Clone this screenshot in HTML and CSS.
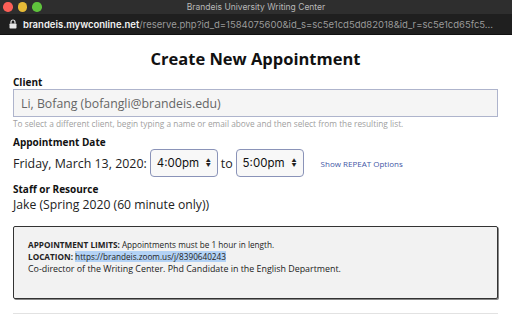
FILE: index.html
```html
<!DOCTYPE html>
<html lang="en">
<head>
    <meta charset="UTF-8">
    <meta name="viewport" content="width=device-width, initial-scale=1.0">
    <title>Brandeis University Writing Center</title>
    <link rel="stylesheet" href="styles.css">
</head>
<body>
    <div class="titlebar">
        <div class="lights">
            <span class="light red"></span>
            <span class="light yellow"></span>
            <span class="light green"></span>
        </div>
        <div class="window-title">Brandeis University Writing Center</div>
    </div>
    <div class="urlbar">
        <svg class="lock" width="8" height="10" viewBox="0 0 8 10">
            <path d="M2 4.5V3a2 2 0 0 1 4 0v1.5" fill="none" stroke="#e8e8e8" stroke-width="1.2"/>
            <rect x="0.5" y="4.5" width="7" height="5" rx="0.8" fill="#e8e8e8"/>
        </svg>
        <span class="host">brandeis.mywconline.net</span><span class="path">/reserve.php?id_d=1584075600&amp;id_s=sc5e1cd5dd82018&amp;id_r=sc5e1cd65fc5...</span>
    </div>

    <div class="page">
        <h1>Create New Appointment</h1>

        <div class="field">
            <label class="field-label">Client</label>
            <div class="client-input">Li, Bofang (bofangli@brandeis.edu)</div>
            <div class="hint">To select a different client, begin typing a name or email above and then select from the resulting list.</div>
        </div>

        <div class="field">
            <label class="field-label">Appointment Date</label>
            <div class="date-row">
                <span class="date-text">Friday, March 13, 2020:</span>
                <div class="select">4:00pm <span class="arrows">&#9650;<br>&#9660;</span></div>
                <span class="date-text">to</span>
                <div class="select">5:00pm <span class="arrows">&#9650;<br>&#9660;</span></div>
                <a class="repeat" href="#">Show REPEAT Options</a>
            </div>
        </div>

        <div class="field">
            <label class="field-label">Staff or Resource</label>
            <div class="staff">Jake (Spring 2020 (60 minute only))</div>
        </div>

        <div class="limits">
            <div class="small"><b>APPOINTMENT LIMITS:</b> Appointments must be 1 hour in length.</div>
            <div class="small"><b>LOCATION:</b> <span class="selected">https://brandeis.zoom.us/j/8390640243</span></div>
            <div class="bio">Co-director of the Writing Center. Phd Candidate in the English Department.</div>
        </div>

        <hr class="divider">
    </div>
</body>
</html>
```

FILE: styles.css
```css
body {
    margin: 0;
    font-family: "Open Sans", sans-serif;
    background-color: #fff;
    color: #222;
    overflow: hidden;
}

.titlebar {
    height: 14px;
    background-color: #2e2e2e;
    position: relative;
    display: flex;
    align-items: center;
    justify-content: center;
}

.lights {
    position: absolute;
    left: 3px;
    top: 2px;
    display: flex;
    gap: 5px;
}

.light {
    width: 9.5px;
    height: 9.5px;
    border-radius: 50%;
}

.red { background-color: #fc5f57; }
.yellow { background-color: #e6bb37; }
.green { background-color: #5fc33c; }

.window-title {
    font-family: Inter, "Liberation Sans", sans-serif;
    font-size: 8.5px;
    color: #b8b8b8;
}

.urlbar {
    height: 20px;
    background-color: #1f1f1f;
    display: flex;
    align-items: center;
    padding-left: 9px;
    font-family: Inter, "Liberation Sans", sans-serif;
    font-size: 9.5px;
    white-space: nowrap;
    overflow: hidden;
    border-bottom: 1px solid #111;
}

.lock {
    margin-right: 6px;
}

.host {
    color: #f2f2f2;
    font-weight: 600;
}

.path {
    color: #9a9a9a;
}

.page {
    padding: 0 14px 0 13px;
}

h1 {
    margin: 12px 0 5px;
    text-align: center;
    font-size: 16.5px;
    line-height: 24px;
    font-weight: 700;
    color: #111;
}

.field {
    margin-bottom: 6px;
}

.field-label {
    display: block;
    font-size: 10px;
    line-height: 13px;
    font-weight: 700;
    color: #111;
}

.client-input {
    height: 28px;
    box-sizing: border-box;
    border: 1px solid #aeb4cc;
    background-color: #f5f5f5;
    padding: 0 7px;
    display: flex;
    align-items: center;
    font-size: 12.3px;
    color: #666;
}

.hint {
    font-size: 8.3px;
    line-height: 12px;
    color: #a0a0a0;
    margin-top: 1px;
}

.date-row {
    display: flex;
    align-items: center;
    gap: 3px;
}

.date-text {
    font-size: 12.4px;
    color: #222;
}

.select {
    width: 68px;
    height: 28px;
    box-sizing: border-box;
    border: 1px solid #8a93b8;
    border-radius: 4px;
    background-color: #f8f8f8;
    display: flex;
    align-items: center;
    justify-content: space-between;
    padding: 0 6px 0 6px;
    font-family: Inter, "Liberation Sans", sans-serif;
    font-size: 11.5px;
    color: #111;
}

.arrows {
    font-size: 5px;
    line-height: 5px;
    color: #222;
}

.repeat {
    margin-left: 14px;
    font-size: 8px;
    color: #3f57a6;
    text-decoration: none;
}

.staff {
    font-size: 12.2px;
    line-height: 17px;
    color: #222;
}

.limits {
    margin-top: 13px;
    height: 73px;
    box-sizing: border-box;
    border: 1px solid #333;
    border-radius: 2px;
    box-shadow: 1px 1px 0 #888;
    background-color: #f2f2f2;
    padding: 12px 14px;
}

.small {
    font-size: 8.2px;
    color: #222;
    line-height: 12px;
}

.selected {
    background-color: #b3d2f5;
}

.bio {
    font-size: 8.9px;
    line-height: 12px;
    color: #222;
}

.divider {
    margin: 14px 0 0;
    border: 0;
    border-top: 1px solid #e2e2e2;
}
```
